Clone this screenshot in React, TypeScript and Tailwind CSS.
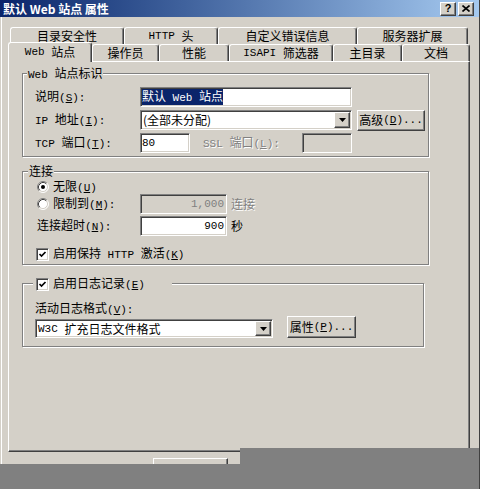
import type { ReactNode } from "react";

const mono = "font-['Liberation_Mono',monospace] text-[11px]";
const sunken =
  "border border-t-[#808080] border-l-[#808080] border-r-white border-b-white p-px shadow-[inset_1px_1px_0_#404040,inset_-1px_-1px_0_#d4d0c8]";
const raised =
  "border border-t-white border-l-white border-r-[#404040] border-b-[#404040] shadow-[inset_-1px_-1px_0_#808080]";
const disabled = "text-[#808080] [text-shadow:1px_1px_0_#fff]";

// "&" marks the access key, ascii runs get the narrow mono face
function T({ s }: { s: string }) {
  const out: ReactNode[] = [];
  const re = /&(.)|([\x20-\x25\x27-\x7e]+)|([^\x20-\x7e]+)/g;
  let m: RegExpExecArray | null;
  let i = 0;
  while ((m = re.exec(s))) {
    if (m[1]) {
      out.push(
        <span key={i++} className={`${mono} underline`}>
          {m[1]}
        </span>
      );
    } else if (m[2]) {
      out.push(
        <span key={i++} className={`${mono} whitespace-pre`}>
          {m[2]}
        </span>
      );
    } else {
      out.push(<span key={i++}>{m[3]}</span>);
    }
  }
  return <>{out}</>;
}

function Arrow() {
  return (
    <div className={`${raised} flex w-[16px] items-center justify-center self-stretch bg-[#d4d0c8]`}>
      <svg width="7" height="4" viewBox="0 0 7 4">
        <polygon points="0,0 7,0 3.5,4" fill="#000" />
      </svg>
    </div>
  );
}

function Button({ label, className }: { label: string; className: string }) {
  return (
    <div className={`${raised} flex items-center justify-center bg-[#d4d0c8] ${className}`}>
      <T s={label} />
    </div>
  );
}

function Radio({ on }: { on?: boolean }) {
  return (
    <svg width="12" height="12" viewBox="0 0 12 12" className="shrink-0">
      <circle cx="6" cy="6" r="5" fill="#fff" />
      <path d="M2.11 9.89 A5.5 5.5 0 0 1 9.89 2.11" stroke="#808080" fill="none" />
      <path d="M9.89 2.11 A5.5 5.5 0 0 1 2.11 9.89" stroke="#fff" fill="none" />
      <path d="M2.82 9.18 A4.5 4.5 0 0 1 9.18 2.82" stroke="#404040" fill="none" />
      <path d="M9.18 2.82 A4.5 4.5 0 0 1 2.82 9.18" stroke="#d4d0c8" fill="none" />
      {on && <circle cx="6" cy="6" r="2" fill="#000" />}
    </svg>
  );
}

function Check() {
  return (
    <div className={`${sunken} flex h-[13px] w-[13px] shrink-0 items-center justify-center bg-white !p-0`}>
      <svg width="9" height="9" viewBox="0 0 9 9">
        <path d="M1.5 4 L3.5 6 L7.5 2" stroke="#000" strokeWidth="1.7" fill="none" />
      </svg>
    </div>
  );
}

function Group({
  label,
  className,
  children,
}: {
  label: ReactNode;
  className: string;
  children: ReactNode;
}) {
  return (
    <div
      className={`relative border border-[#808080] shadow-[inset_1px_1px_0_#fff,1px_1px_0_#fff] ${className}`}
    >
      {label}
      {children}
    </div>
  );
}

const backTabs = [
  { name: "目录安全性", w: "w-[114px]" },
  { name: "HTTP 头", w: "w-[94px]" },
  { name: "自定义错误信息", w: "w-[139px]" },
  { name: "服务器扩展", w: "w-[111px]" },
];

const frontTabs = [
  { name: "操作员", w: "w-[67px]" },
  { name: "性能", w: "w-[70px]" },
  { name: "ISAPI 筛选器", w: "w-[104px]" },
  { name: "主目录", w: "w-[69px]" },
  { name: "文档", w: "w-[68px]" },
];

const tab =
  "flex items-center justify-center rounded-t-[3px] border-t border-l border-r border-t-white border-l-white border-r-[#404040] shadow-[inset_-1px_0_0_#808080] bg-[#d4d0c8]";

export default function App() {
  return (
    <div className="relative h-[489px] w-[480px] overflow-hidden border-r border-r-[#404040] bg-[#d4d0c8] text-[12px] leading-[14px] text-black shadow-[inset_1px_0_0_#d4d0c8,inset_2px_0_0_#fff] font-['Noto_Sans_CJK_SC',sans-serif]">
      {/* title bar */}
      <div className="flex h-[17px] items-center justify-between bg-gradient-to-r from-[#0a246a] to-[#a6caf0] pl-[3px] pr-[5px]">
        <span className="font-bold text-white">默认 Web 站点 属性</span>
        <div className="flex gap-[2px]">
          <div className={`${raised} flex h-[14px] w-[16px] items-center justify-center bg-[#d4d0c8] text-[11px] font-bold leading-none font-['Liberation_Sans',sans-serif]`}>
            ?
          </div>
          <div className={`${raised} flex h-[14px] w-[16px] items-center justify-center bg-[#d4d0c8]`}>
            <svg width="8" height="7" viewBox="0 0 8 7">
              <path d="M0.5 0.5 L7.5 6.5 M7.5 0.5 L0.5 6.5" stroke="#000" strokeWidth="1.6" />
            </svg>
          </div>
        </div>
      </div>

      {/* tabs */}
      <div className="ml-[10px] mt-[10px] flex h-[17px]">
        {backTabs.map((t) => (
          <div key={t.name} className={`${tab} ${t.w} h-[17px]`}>
            <T s={t.name} />
          </div>
        ))}
      </div>
      <div className="ml-[8px] flex h-[17px] items-end">
        <div className={`${tab} relative z-10 -mb-px h-[20px] w-[84px] pb-[2px]`}>
          <T s="Web 站点" />
        </div>
        {frontTabs.map((t) => (
          <div key={t.name} className={`${tab} ${t.w} h-[17px]`}>
            <T s={t.name} />
          </div>
        ))}
      </div>

      {/* page */}
      <div className="ml-[8px] h-[391px] w-[462px] border border-t-white border-l-white border-r-[#404040] border-b-[#404040] pl-[13px] pt-[11px] shadow-[inset_-1px_-1px_0_#808080]">
        <Group
          className="w-[407px] pb-[3px] pl-[12px] pt-[13px]"
          label={
            <div className="absolute -top-[8px] left-[4px] bg-[#d4d0c8] px-px">
              <T s="Web 站点标识" />
            </div>
          }
        >
          <div className="flex flex-col gap-[3px]">
            <div className="flex h-[20px] items-center">
              <span className="w-[105px]">
                <T s="说明(&S):" />
              </span>
              <div className={`${sunken} flex h-[20px] w-[212px] items-center bg-white pl-[1px]`}>
                <span className="bg-[#0a246a] text-white">
                  <T s="默认 Web 站点" />
                </span>
              </div>
            </div>
            <div className="flex h-[20px] items-center">
              <span className="w-[105px]">
                <T s="IP 地址(&I):" />
              </span>
              <div className={`${sunken} flex h-[20px] w-[212px] bg-white`}>
                <span className="flex flex-1 items-center pl-[1px]">(全部未分配)</span>
                <Arrow />
              </div>
              <Button label="高级(&D)..." className="ml-[5px] h-[21px] w-[68px]" />
            </div>
            <div className="flex h-[20px] items-center">
              <span className="w-[105px]">
                <T s="TCP 端口(&T):" />
              </span>
              <div className={`${sunken} flex h-[20px] w-[50px] items-center bg-white pl-[1px]`}>
                <T s="80" />
              </div>
              <span className={`ml-[13px] w-[99px] ${disabled}`}>
                <T s="SSL 端口(&L):" />
              </span>
              <div className={`${sunken} h-[20px] w-[50px] bg-[#d4d0c8]`} />
            </div>
          </div>
        </Group>

        <Group
          className="mt-[14px] w-[407px] pb-[2px] pl-[14px] pt-[7px]"
          label={
            <div className="absolute -top-[8px] left-[5px] bg-[#d4d0c8] px-px">连接</div>
          }
        >
          <div className="flex h-[15px] items-center gap-[4px]">
            <Radio on />
            <span>
              <T s="无限(&U)" />
            </span>
          </div>
          <div className="flex h-[20px] items-center">
            <div className="flex w-[103px] items-center gap-[4px]">
              <Radio />
              <span>
                <T s="限制到(&M):" />
              </span>
            </div>
            <div className={`${sunken} flex h-[20px] w-[87px] items-center justify-end bg-[#d4d0c8] pr-[2px] text-[#808080]`}>
              <T s="1,000" />
            </div>
            <span className={`ml-[4px] ${disabled}`}>连接</span>
          </div>
          <div className="mt-[2px] flex h-[20px] items-center">
            <span className="w-[103px]">
              <T s="连接超时(&N):" />
            </span>
            <div className={`${sunken} flex h-[20px] w-[87px] items-center justify-end bg-white pr-[2px]`}>
              <T s="900" />
            </div>
            <span className="ml-[4px]">秒</span>
          </div>
          <div className="-ml-px mt-[10px] flex h-[16px] items-center gap-[4px]">
            <Check />
            <span>
              <T s="启用保持 HTTP 激活(&K)" />
            </span>
          </div>
        </Group>

        <Group
          className="mt-[18px] w-[402px] pb-[8px] pl-[12px] pt-[17px]"
          label={
            <div className="absolute -top-[7px] left-[10px] flex h-[14px] w-[139px] items-center gap-[4px] bg-[#d4d0c8] pl-[3px]">
              <Check />
              <span>
                <T s="启用日志记录(&E)" />
              </span>
            </div>
          }
        >
          <div className="h-[14px]">
            <T s="活动日志格式(&V):" />
          </div>
          <div className="mt-[1px] flex items-start">
            <div className={`${sunken} mt-[3px] flex h-[19px] w-[238px] bg-white`}>
              <span className="flex flex-1 items-center pl-[1px]">
                <T s="W3C 扩充日志文件格式" />
              </span>
              <Arrow />
            </div>
            <Button label="属性(&P)..." className="ml-[14px] h-[22px] w-[69px]" />
          </div>
        </Group>
      </div>

      {/* bottom buttons, mostly covered */}
      <div className="pl-[153px] pt-[6px]">
        <div className={`${raised} h-[23px] w-[75px] bg-[#d4d0c8]`} />
      </div>

      <div className="absolute left-[240px] top-[448px] h-[41px] w-[240px] bg-[#808080]" />
      <div className="absolute left-0 top-[464px] h-[25px] w-[480px] bg-[#808080]" />
    </div>
  );
}
